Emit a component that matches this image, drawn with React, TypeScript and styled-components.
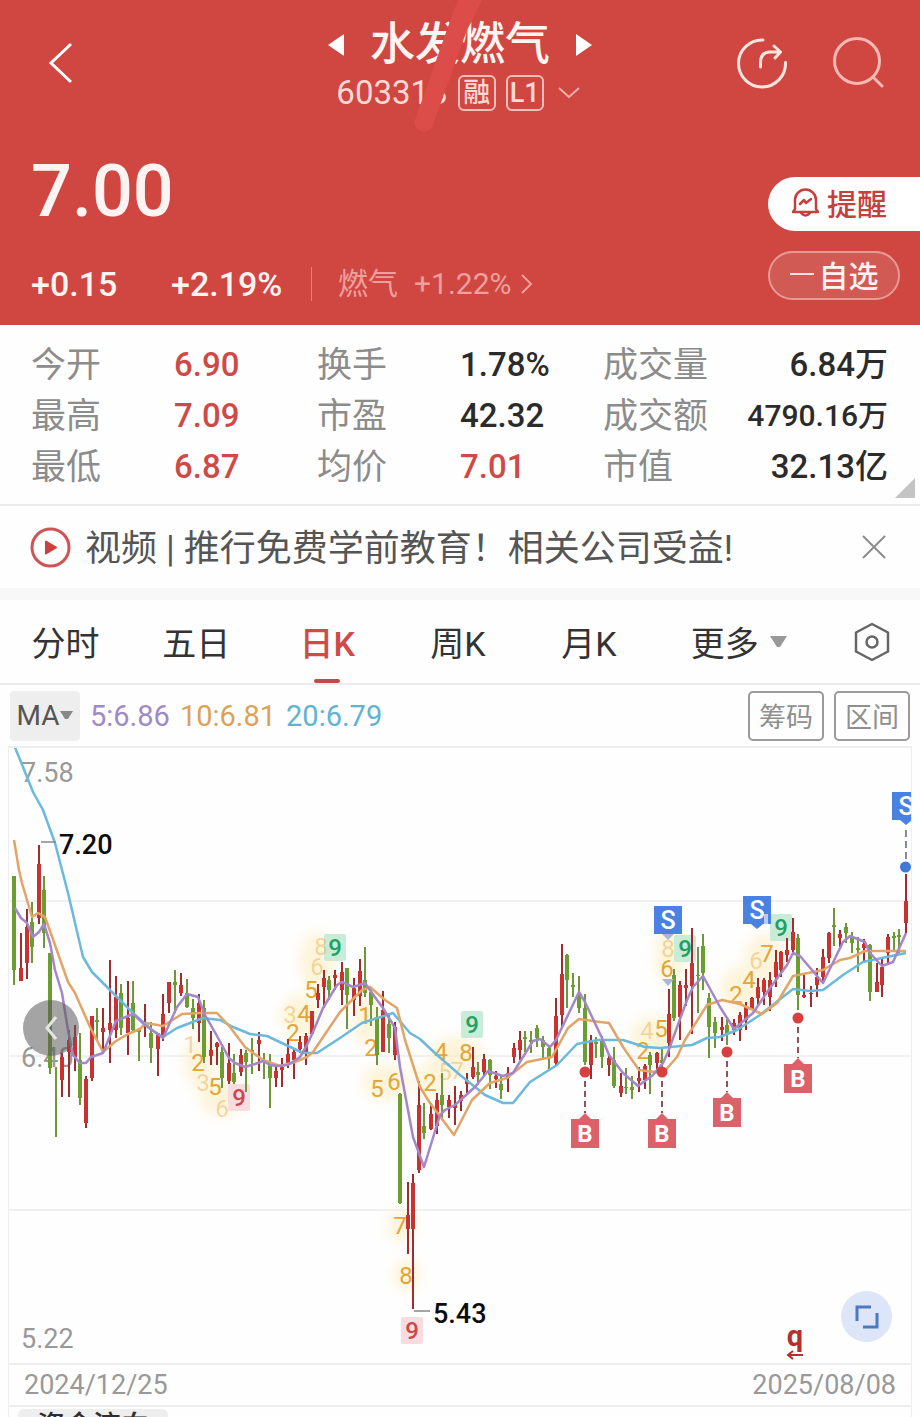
import React from "react";
import styled, { createGlobalStyle } from "styled-components";

const Global = createGlobalStyle`
  *, *::before, *::after { box-sizing: border-box; }
  body {
    margin: 0;
    background: #fefefe;
    font-family: Roboto, "Noto Sans CJK SC", sans-serif;
    color: #2e2e2e;
  }
  button { font: inherit; color: inherit; background: none; border: 0; padding: 0; cursor: pointer; }
  a { color: inherit; text-decoration: none; }
  svg { display: block; }
`;

const Page = styled.main`
  height: 100vh;
  overflow: hidden;
  display: flex;
  flex-direction: column;
  & > * { flex-shrink: 0; }
`;

const Header = styled.header`
  background: #d04641;
  color: #fff4f2;
  height: 325px;
  position: relative;
`;

const TopBar = styled.div`
  display: grid;
  grid-template-columns: 1fr auto 1fr;
  align-items: center;
  height: 126px;
  padding: 0 36px;
`;

const HeaderBack = styled.button`
  justify-self: start;
  padding: 0 10px;
`;

const TitleBlock = styled.div`
  display: flex;
  flex-direction: column;
  align-items: center;
  padding-top: 6px;
`;

const TitleRow = styled.div`
  display: flex;
  align-items: center;
  gap: 26px;
`;

const StockName = styled.h1`
  margin: 0;
  font-size: 45px;
  line-height: 50px;
  font-weight: 500;
`;

const CodeRow = styled.div`
  display: flex;
  align-items: center;
  gap: 10px;
  color: #ffd9d4;
  font-size: 33px;
  line-height: 38px;
  margin-top: 4px;
`;

const Badge = styled.span`
  width: 38px;
  height: 36px;
  border: 2px solid #f5bdb8;
  border-radius: 6px;
  font-size: 27px;
  line-height: 33px;
  font-weight: 500;
  text-align: center;
`;

const Swipe = styled.svg`
  position: absolute;
  top: 0;
  left: calc(50% - 60px);
  width: 90px;
  height: 140px;
  pointer-events: none;
`;

const Actions = styled.div`
  display: flex;
  justify-content: flex-end;
  gap: 44px;
`;

const Quote = styled.div`
  display: flex;
  justify-content: space-between;
`;

const QuoteMain = styled.div`
  padding: 28px 0 0 31px;
`;

const Price = styled.div`
  font-size: 72px;
  line-height: 76px;
  font-weight: 500;
`;

const ChangeRow = styled.div`
  display: flex;
  align-items: center;
  margin-top: 34px;
  height: 40px;
  font-size: 34px;
  font-weight: 500;
`;

const Change = styled.span`
  width: 140px;
`;

const Sector = styled.a`
  display: flex;
  align-items: center;
  gap: 16px;
  padding-left: 26px;
  border-left: 1px solid #dd827c;
  font-size: 30px;
  line-height: 34px;
  font-weight: 400;
  color: #eda19c;
`;

const SectorChange = styled.span`
  display: flex;
  align-items: center;
  gap: 8px;
  font-size: 30px;
`;

const QuoteActions = styled.div`
  display: flex;
  flex-direction: column;
  gap: 20px;
  width: 152px;
  padding-top: 51px;
`;

const RemindButton = styled.button`
  display: flex;
  align-items: center;
  gap: 7px;
  height: 54px;
  padding: 0 0 4px 23px;
  background: #fff;
  color: #c4403c;
  border-radius: 27px 0 0 27px;
  font-size: 30px;
  font-weight: 500;
`;

const WatchButton = styled.button`
  display: flex;
  align-items: center;
  justify-content: center;
  gap: 5px;
  width: 132px;
  height: 49px;
  padding-bottom: 3px;
  border: 2px solid #e79a95;
  border-radius: 25px;
  background: #d15a55;
  font-size: 30px;
  font-weight: 500;
  &::before { content: ""; width: 24px; height: 2px; background: #ffe3e0; }
`;

const Stats = styled.dl`
  position: relative;
  display: grid;
  grid-template-columns: 143fr 143fr 143fr 143fr 110fr 175fr;
  grid-auto-rows: 51px;
  margin: 0;
  padding: 14px 32px 12px 31px;
  height: 179px;
`;

const StatLabel = styled.dt`
  font-size: 35px;
  line-height: 54px;
  color: #8c8c8c;
`;

const StatValue = styled.dd<{ $up?: boolean; $end?: boolean; $small?: boolean }>`
  margin: 0;
  font-size: ${(p) => (p.$small ? 30 : 33)}px;
  line-height: 52px;
  font-weight: 500;
  white-space: nowrap;
  text-align: ${(p) => (p.$end ? "right" : "left")};
  color: ${(p) => (p.$up ? "#cf4a47" : "#2b2b2b")};
`;

const Corner = styled.span`
  position: absolute;
  right: 5px;
  bottom: 6px;
  border-left: 20px solid transparent;
  border-bottom: 20px solid #c4c4c4;
`;

const News = styled.section`
  display: flex;
  align-items: center;
  gap: 14px;
  height: 84px;
  padding: 0 34px 0 30px;
  border-top: 2px solid #ebebeb;
`;

const NewsLink = styled.a`
  flex: 1;
  padding-top: 4px;
  font-size: 36px;
  line-height: 48px;
  color: #555;
  white-space: nowrap;
`;

const Tabs = styled.nav`
  display: grid;
  grid-template-columns: repeat(5, 131fr) 170fr 96fr;
  height: 97px;
  border-top: 12px solid #f8f8f8;
  border-bottom: 2px solid #ebebeb;
`;

const Tab = styled.button<{ $active?: boolean }>`
  position: relative;
  display: flex;
  align-items: center;
  justify-content: center;
  gap: 10px;
  font-size: 34px;
  font-weight: ${(p) => (p.$active ? 500 : 400)};
  color: ${(p) => (p.$active ? "#d04a48" : "#333")};
  &::after {
    content: "";
    display: ${(p) => (p.$active ? "block" : "none")};
    position: absolute;
    bottom: 0;
    width: 26px;
    height: 4px;
    border-radius: 2px;
    background: #c4484a;
  }
`;

const MaBar = styled.div`
  display: flex;
  align-items: center;
  gap: 10px;
  height: 61px;
  padding: 0 10px;
`;

const MaSelect = styled.button`
  display: flex;
  align-items: center;
  justify-content: center;
  gap: 1px;
  width: 70px;
  height: 50px;
  background: #eeeeee;
  border-radius: 4px;
  font-size: 28px;
  color: #555;
`;

const MaValue = styled.span<{ $color: string }>`
  font-size: 29px;
  line-height: 34px;
  color: ${(p) => p.$color};
`;

const Spacer = styled.span`
  flex: 1;
`;

const OutlineButton = styled.button`
  width: 76px;
  height: 50px;
  border: 2px solid #9a9a9a;
  border-radius: 5px;
  font-size: 27px;
  color: #8f8f8f;
`;

const ChartFrame = styled.section`
  position: relative;
  margin: 0 8px;
  border: solid #eeeeee;
  border-width: 2px 1px;
`;

const ChartSvg = styled.svg`
  width: 100%;
  height: auto;
  font-family: Roboto, sans-serif;
`;

const BackButton = styled.button`
  position: absolute;
  left: 14px;
  top: 41%;
  width: 56px;
  height: 56px;
  border-radius: 50%;
  background: rgba(90, 90, 90, 0.55);
  display: grid;
  place-items: center;
`;

const ExpandButton = styled.button`
  position: absolute;
  right: 19px;
  bottom: 21px;
  width: 51px;
  height: 51px;
  border-radius: 50%;
  background: #dde6f8;
  display: grid;
  place-items: center;
`;

const Dates = styled.div`
  display: flex;
  justify-content: space-between;
  margin: 0 8px;
  padding: 0 15px;
  border: solid #eeeeee;
  border-width: 0 1px 2px;
  font-size: 27px;
  line-height: 40px;
  color: #999;
`;

const Indicator = styled.div`
  margin: 0 8px;
  padding: 2px 9px 0;
  border: solid #eeeeee;
  border-width: 0 1px;
`;

const IndicatorButton = styled.button`
  width: 150px;
  height: 36px;
  background: #eeeeee;
  border-radius: 6px;
  font-size: 28px;
  line-height: 36px;
  font-weight: 500;
`;

// x, wick top, wick bottom, body top, body bottom, direction (1 = up)
type Candle = [number, number, number, number, number, 0 | 1];
const candles: Candle[] = [
  [14, 876, 985, 876, 970, 0], [21, 933, 981, 968, 981, 1], [27, 909, 979, 927, 963, 1],
  [32, 902, 963, 922, 947, 0], [39, 845, 924, 864, 918, 1], [44, 876, 948, 890, 933, 0],
  [50, 953, 1074, 953, 1068, 0], [56, 1067, 1137, 1067, 1067, 0], [62, 1053, 1097, 1057, 1080, 1],
  [69, 1030, 1097, 1040, 1052, 1], [75, 1025, 1071, 1037, 1057, 1], [80, 1033, 1105, 1060, 1098, 0],
  [86, 1076, 1128, 1079, 1123, 1], [92, 1016, 1081, 1016, 1078, 1], [97, 1008, 1039, 1020, 1022, 0],
  [103, 1008, 1052, 1028, 1032, 1], [110, 960, 1063, 1023, 1030, 1], [116, 976, 1038, 997, 1030, 1],
  [121, 984, 1035, 993, 1028, 0], [128, 981, 1055, 1018, 1033, 1], [133, 981, 1033, 1003, 1030, 0],
  [139, 1028, 1061, 1030, 1032, 0], [145, 1004, 1037, 1022, 1027, 1], [151, 1022, 1063, 1033, 1048, 0],
  [158, 1033, 1076, 1033, 1049, 1], [163, 994, 1041, 1014, 1035, 1], [169, 982, 1013, 982, 1003, 1],
  [175, 970, 1013, 982, 985, 0], [181, 973, 996, 985, 993, 1], [187, 979, 1008, 993, 1007, 0],
  [193, 999, 1029, 1008, 1018, 0], [199, 994, 1042, 1003, 1023, 1], [204, 1000, 1063, 1008, 1057, 0],
  [211, 1031, 1065, 1050, 1056, 1], [217, 1042, 1065, 1043, 1047, 1], [222, 1047, 1088, 1052, 1078, 0],
  [229, 1043, 1084, 1063, 1081, 1], [234, 1054, 1084, 1073, 1082, 0], [241, 1049, 1076, 1055, 1072, 1],
  [246, 1050, 1092, 1053, 1062, 0], [252, 1038, 1074, 1050, 1052, 0], [259, 1032, 1071, 1040, 1044, 1],
  [264, 1053, 1079, 1060, 1062, 0], [270, 1054, 1108, 1063, 1078, 0], [276, 1067, 1087, 1071, 1078, 1],
  [282, 1058, 1087, 1067, 1070, 1], [288, 1039, 1068, 1054, 1064, 1], [294, 1049, 1079, 1052, 1060, 1],
  [300, 1036, 1053, 1042, 1049, 1], [306, 1033, 1065, 1036, 1052, 1], [312, 1011, 1034, 1011, 1034, 1],
  [318, 984, 1008, 993, 1000, 1], [324, 970, 1008, 978, 987, 1], [329, 976, 1000, 980, 990, 0],
  [335, 970, 990, 975, 978, 1], [342, 962, 1005, 972, 990, 1], [347, 968, 1029, 968, 995, 0],
  [354, 978, 1016, 988, 1000, 1], [360, 959, 1006, 971, 996, 1], [365, 947, 997, 980, 993, 0],
  [371, 990, 1026, 992, 1005, 0], [377, 1007, 1065, 1017, 1055, 0], [383, 991, 1052, 1010, 1052, 1],
  [389, 1015, 1053, 1024, 1038, 0], [395, 1022, 1060, 1027, 1055, 1], [400, 1093, 1204, 1094, 1203, 0],
  [408, 1182, 1254, 1215, 1229, 1], [413, 1174, 1309, 1183, 1229, 1], [419, 1081, 1173, 1105, 1170, 1],
  [424, 1103, 1139, 1126, 1133, 0], [431, 1103, 1130, 1114, 1129, 1], [437, 1093, 1134, 1100, 1126, 1],
  [442, 1073, 1120, 1095, 1105, 0], [449, 1095, 1118, 1100, 1107, 1], [455, 1086, 1125, 1105, 1108, 1],
  [461, 1091, 1111, 1095, 1101, 1], [467, 1073, 1093, 1080, 1084, 1], [473, 1047, 1079, 1067, 1077, 1],
  [478, 1062, 1085, 1072, 1075, 0], [484, 1054, 1075, 1059, 1072, 1], [490, 1059, 1089, 1060, 1075, 0],
  [496, 1071, 1088, 1076, 1079, 1], [501, 1075, 1099, 1084, 1090, 0], [508, 1067, 1092, 1073, 1078, 1],
  [514, 1043, 1063, 1048, 1057, 1], [520, 1031, 1060, 1040, 1050, 1], [525, 1031, 1052, 1037, 1039, 0],
  [531, 1031, 1053, 1040, 1042, 0], [537, 1025, 1047, 1028, 1038, 0], [543, 1036, 1059, 1040, 1047, 0],
  [549, 1046, 1070, 1048, 1057, 0], [556, 998, 1065, 1016, 1063, 1], [562, 944, 1027, 974, 1015, 1],
  [567, 954, 1008, 955, 980, 0], [573, 973, 997, 985, 987, 0], [579, 976, 1013, 997, 1008, 0],
  [585, 994, 1065, 1008, 1062, 0], [591, 1035, 1079, 1040, 1065, 1], [596, 1037, 1058, 1042, 1044, 0],
  [602, 1036, 1068, 1040, 1057, 0], [609, 1055, 1076, 1058, 1065, 1], [614, 1047, 1088, 1060, 1086, 0],
  [621, 1073, 1097, 1086, 1093, 1], [626, 1068, 1094, 1087, 1088, 0], [632, 1076, 1099, 1087, 1090, 0],
  [639, 1067, 1092, 1078, 1081, 1], [645, 1064, 1089, 1066, 1080, 1], [650, 1052, 1094, 1055, 1065, 0],
  [657, 1052, 1072, 1053, 1063, 1], [662, 1048, 1073, 1060, 1063, 0], [669, 989, 1057, 1014, 1043, 1],
  [674, 969, 1021, 975, 1018, 0], [680, 981, 1040, 985, 1017, 1], [686, 969, 1006, 985, 988, 1],
  [692, 928, 1034, 963, 986, 1], [698, 947, 1013, 975, 976, 0], [703, 934, 990, 946, 973, 0],
  [709, 993, 1058, 998, 1027, 0], [715, 1017, 1048, 1022, 1033, 0], [722, 1017, 1041, 1027, 1030, 1],
  [727, 1017, 1045, 1025, 1035, 0], [734, 1019, 1035, 1023, 1030, 1], [740, 1012, 1041, 1015, 1030, 1],
  [746, 1002, 1030, 1007, 1020, 1], [752, 997, 1010, 998, 1010, 1], [758, 978, 1005, 987, 998, 1],
  [764, 978, 1005, 980, 992, 1], [770, 972, 1011, 980, 997, 1], [776, 950, 987, 962, 977, 1],
  [781, 951, 977, 952, 970, 1], [787, 938, 962, 950, 955, 1], [793, 918, 955, 932, 950, 1],
  [798, 934, 1010, 938, 995, 0], [804, 973, 998, 995, 997, 1], [811, 986, 1007, 993, 994, 1],
  [817, 968, 997, 977, 985, 1], [823, 949, 983, 957, 977, 1], [829, 932, 963, 933, 958, 1],
  [834, 908, 946, 925, 927, 0], [840, 930, 947, 934, 938, 1], [846, 923, 943, 927, 933, 0],
  [852, 932, 953, 937, 943, 0], [858, 937, 972, 948, 950, 0], [864, 939, 962, 944, 948, 1],
  [870, 944, 1001, 945, 992, 0], [877, 963, 992, 982, 992, 1], [882, 958, 997, 967, 985, 1],
  [888, 934, 963, 937, 953, 1], [894, 932, 950, 936, 938, 0], [899, 929, 953, 935, 937, 0],
  [906, 874, 933, 901, 923, 1],
];

const ma5 =
  "15,908 21,918 27,923 33,937 39,932 44,924 50,943 55,970 62,993 68,1030 73,1055 80,1063 86,1063 91,1057 103,1053 116,1021 128,1016 133,1014 145,1025 163,1038 177,1007 187,994 198,997 205,1015 217,1036 229,1058 235,1063 245,1067 255,1064 263,1061 270,1065 277,1066 288,1065 300,1057 307,1045 313,1032 323,1008 337,985 342,982 353,987 365,983 377,1000 383,1008 395,1028 400,1067 413,1137 424,1167 440,1115 445,1110 455,1105 475,1087 488,1071 503,1076 513,1073 533,1041 540,1039 550,1047 556,1040 579,992 585,1002 602,1038 609,1055 623,1073 638,1086 653,1075 663,1063 668,1052 687,1000 693,987 703,976 720,1007 734,1029 753,1013 770,988 787,965 793,953 800,956 823,983 843,942 850,936 865,942 870,953 882,966 893,962 906,933";
const ma10 =
  "14,840 19,870 22,883 32,917 38,913 45,917 55,945 68,982 75,993 90,1027 103,1052 116,1041 128,1034 140,1029 146,1023 163,1026 182,1014 200,1013 217,1013 230,1027 245,1047 263,1060 280,1066 295,1062 307,1057 313,1052 340,1012 362,990 370,987 385,1000 397,1008 405,1040 420,1087 430,1103 454,1135 472,1100 490,1083 507,1078 527,1062 552,1057 568,1028 579,1019 600,1022 609,1023 623,1047 639,1070 663,1073 677,1057 685,1040 707,1005 722,1000 740,1004 762,1014 777,1003 793,976 823,970 840,960 850,958 865,951 887,951 906,951";
const ma20 =
  "14,745 23,767 33,792 43,810 55,843 68,893 83,957 92,972 108,988 133,1013 152,1030 163,1037 177,1028 203,1018 220,1020 233,1027 250,1034 267,1036 303,1053 317,1053 340,1038 362,1023 393,1013 410,1033 420,1039 437,1055 460,1075 485,1095 503,1103 513,1103 530,1082 557,1065 577,1044 598,1040 623,1040 645,1047 660,1048 692,1045 707,1038 720,1037 737,1030 760,1015 793,989 810,991 823,990 843,975 863,962 906,953";

// x, centre y, digit, faded
const counts: [number, number, string, boolean?][] = [
  [190, 1044, "1", true], [198, 1062, "2"], [203, 1082, "3", true], [215, 1086, "5"], [222, 1108, "6", true],
  [290, 1014, "3", true], [293, 1032, "2"], [304, 1013, "4"], [311, 989, "5"], [317, 966, "6", true],
  [321, 946, "8", true], [365, 1015, "1"], [371, 1047, "2"], [377, 1088, "5"],
  [394, 1081, "6"], [400, 1225, "7"], [406, 1275, "8"], [430, 1082, "2"], [441, 1051, "4"],
  [445, 1071, "5", true], [457, 1070, "7", true], [466, 1052, "8"], [643, 1050, "2"], [647, 1030, "4", true],
  [661, 1028, "5"], [667, 968, "6"], [668, 948, "8", true], [736, 994, "2"],
  [749, 979, "4"], [756, 960, "6", true], [767, 953, "7"],
];

const glows: [number, number, number, number][] = [
  [200, 1062, 16, 26], [222, 1098, 24, 18], [300, 1016, 20, 22], [317, 962, 18, 30], [366, 1020, 14, 26],
  [386, 1082, 24, 18], [401, 1226, 14, 16], [407, 1275, 14, 16], [432, 1080, 16, 18], [456, 1056, 26, 20],
  [654, 1036, 24, 20], [670, 956, 16, 28], [740, 988, 20, 22], [764, 958, 20, 24],
];

const nines: [number, number, boolean][] = [
  [335, 948, false], [472, 1025, false], [685, 949, false], [781, 928, false],
  [239, 1098, true], [412, 1331, true],
];

const buys: [number, number, number][] = [
  [585, 1072, 1133], [662, 1072, 1133], [727, 1052, 1112], [798, 1018, 1078],
];

function BuyMark({ x, dot, y }: { x: number; dot: number; y: number }) {
  return (
    <g>
      <path d={`M${x} ${dot + 9}V${y - 20}`} stroke="#96505a" strokeWidth="2" strokeDasharray="6 4" />
      <circle cx={x} cy={dot} r="5.5" fill="#d8403f" />
      <path d={`M${x - 14} ${y - 14}h8l6 -6 6 6h8v29h-28z`} fill="#da6268" />
      <text x={x} y={y + 9} fontSize="24" fontWeight="700" fill="#fff" textAnchor="middle">B</text>
    </g>
  );
}

function SellMark({ x, y, tip }: { x: number; y: number; tip?: boolean }) {
  return (
    <g>
      <path d={`M${x - 14} ${y - 14}h28v28h${tip ? "-8l-6 5 -6 -5h-8" : "-28"}z`} fill="#4a82e4" />
      <text x={x} y={y + 9} fontSize="25" fontWeight="500" fill="#fff" textAnchor="middle">S</text>
    </g>
  );
}

function KLineChart() {
  return (
    <ChartSvg viewBox="9 748 902 615" role="img" aria-label="日K线图">
      <defs>
        <filter id="soft" x="-50%" y="-50%" width="200%" height="200%">
          <feGaussianBlur stdDeviation="6" />
        </filter>
      </defs>
      <path d="M8 901H912M8 1056H912M8 1210H912" stroke="#f0f0f0" strokeWidth="2" />
      <g fill="#fcefc8" opacity="0.65" filter="url(#soft)">
        {glows.map(([x, y, rx, ry], i) => <ellipse key={i} cx={x} cy={y} rx={rx} ry={ry} />)}
      </g>
      <g fontSize="27" fill="#999">
        <text x="21" y="782">7.58</text>
        <text x="21" y="1067">6.40</text>
        <text x="21" y="1348">5.22</text>
      </g>
      {nines.map(([x, y, low]) => (
        <rect key={x} x={x - 11} y={y - 14} width="22" height="27" rx="2" fill={low ? "#f9dcdf" : "#c9ecd9"} />
      ))}
      <g fontSize="24" fill="#e3a536" textAnchor="middle">
        {counts.map(([x, y, n, faded], i) => (
          <text key={i} x={x} y={y + 9} opacity={faded ? 0.4 : 1}>{n}</text>
        ))}
      </g>
      {candles.map(([x, high, low, top, bottom, up]) => (
        <g key={x}>
          <path d={`M${x} ${high}V${low}`} stroke={up ? "#a12c30" : "#6f9638"} strokeWidth="2" />
          <path d={`M${x} ${top}V${bottom}`} stroke={up ? "#c93230" : "#6a9e30"} strokeWidth="4" />
        </g>
      ))}
      <g fill="none" strokeWidth="2.5" strokeLinejoin="round">
        <polyline points={ma20} stroke="#6bb9dc" />
        <polyline points={ma10} stroke="#e2a467" />
        <polyline points={ma5} stroke="#a387c8" />
      </g>
      <g fontSize="24" fontWeight="500" textAnchor="middle">
        {nines.map(([x, y, low]) => (
          <text key={x} x={x} y={y + 8} fill={low ? "#c8484f" : "#23a062"}>9</text>
        ))}
      </g>
      <path d="M41 842H56M414 1311H430" stroke="#888" strokeWidth="1.5" />
      <g fontSize="27" fontWeight="500" fill="#0c0c0c">
        <text x="59" y="854">7.20</text>
        <text x="433" y="1323">5.43</text>
      </g>
      {buys.map(([x, dot, y]) => <BuyMark key={x} x={x} dot={dot} y={y} />)}
      <path d="M662 934h12l-6 6zM662 979h12l-6 7z" fill="#a9b8d6" />
      <SellMark x={668} y={920} />
      <SellMark x={757} y={910} tip />
      <rect x="764" y="914" width="4" height="10" fill="#bccbe8" />
      <SellMark x={906} y={806} tip />
      <path d="M906 830V862" stroke="#5c6478" strokeWidth="1.5" strokeDasharray="7 4" />
      <circle cx="905.5" cy="867" r="5.5" fill="#3f78d8" />
      <text x="795" y="1346" fontSize="29" fontWeight="700" fill="#b3302c" textAnchor="middle">q</text>
      <path d="M803 1355H789M793 1351l-5 4 5 4" fill="none" stroke="#b3302c" strokeWidth="2" />
    </ChartSvg>
  );
}

const stats: { label: string; value: string; up?: boolean; end?: boolean; small?: boolean }[] = [
  { label: "今开", value: "6.90", up: true }, { label: "换手", value: "1.78%" }, { label: "成交量", value: "6.84万", end: true },
  { label: "最高", value: "7.09", up: true }, { label: "市盈", value: "42.32" }, { label: "成交额", value: "4790.16万", end: true, small: true },
  { label: "最低", value: "6.87", up: true }, { label: "均价", value: "7.01", up: true }, { label: "市值", value: "32.13亿", end: true },
];

export default function App() {
  return (
    <>
      <Global />
      <Page>
        <Header>
          <TopBar>
            <HeaderBack aria-label="返回">
              <svg width="30" height="44" viewBox="0 0 30 44" fill="none" stroke="#fff" strokeWidth="3"><path d="M25 3L5 22L25 41" /></svg>
            </HeaderBack>
            <TitleBlock>
              <TitleRow>
                <button aria-label="上一只">
                  <svg width="16" height="24" viewBox="0 0 16 24"><path d="M16 1V23L0 12Z" fill="#fff" /></svg>
                </button>
                <StockName>水发燃气</StockName>
                <button aria-label="下一只">
                  <svg width="16" height="24" viewBox="0 0 16 24"><path d="M0 1V23L16 12Z" fill="#fff" /></svg>
                </button>
              </TitleRow>
              <CodeRow>
                <span>603318</span>
                <Badge>融</Badge>
                <Badge>L1</Badge>
                <svg width="30" height="16" viewBox="0 0 30 16" fill="none" stroke="#eeb0ab" strokeWidth="2"><path d="M5 3L15 12L25 3" /></svg>
              </CodeRow>
            </TitleBlock>
            <Actions>
              <button aria-label="分享">
                <svg width="52" height="52" viewBox="0 0 52 52" fill="none" stroke="#ffe4df" strokeWidth="3" strokeLinecap="round" strokeLinejoin="round">
                  <path d="M27 3A23.500 23.500 0 1 0 49.500 25.500" />
                  <path d="M24.500 30V25Q25 15 34 15H44M38 9L44.500 15L39 21" />
                </svg>
              </button>
              <button aria-label="搜索">
                <svg width="52" height="52" viewBox="0 0 52 52" fill="none" stroke="#f8b9b3" strokeWidth="3" strokeLinecap="round">
                  <circle cx="25" cy="24" r="22.500" /><path d="M42 41L50 49" />
                </svg>
              </button>
            </Actions>
          </TopBar>
          <Swipe viewBox="0 0 90 140" aria-hidden="true">
            <path d="M58 0H82L73 19L67 30L34 122Q32 131 24 132Q13 129 15 120L49 24Z" fill="#dc4d49" />
          </Swipe>
          <Quote>
            <QuoteMain>
              <Price>7.00</Price>
              <ChangeRow>
                <Change>+0.15</Change>
                <Change>+2.19%</Change>
                <Sector href="#sector">
                  燃气
                  <SectorChange>
                    +1.22%
                    <svg width="14" height="22" viewBox="0 0 14 22" fill="none" stroke="#eda19c" strokeWidth="2"><path d="M2 2L11 11L2 20" /></svg>
                  </SectorChange>
                </Sector>
              </ChangeRow>
            </QuoteMain>
            <QuoteActions>
              <RemindButton>
                <svg width="29" height="30" viewBox="0 0 29 30" fill="none" stroke="#c4403c" strokeWidth="2.500" strokeLinejoin="round" strokeLinecap="round">
                  <path d="M4 22V13A10.500 10.500 0 0 1 25 13V22L27 25H2ZM10 26Q14.500 31 19 26M9 17L13 13L15 16L20 12" />
                </svg>
                提醒
              </RemindButton>
              <WatchButton>自选</WatchButton>
            </QuoteActions>
          </Quote>
        </Header>

        <Stats>
          {stats.map((s) => (
            <React.Fragment key={s.label}>
              <StatLabel>{s.label}</StatLabel>
              <StatValue $up={s.up} $end={s.end} $small={s.small}>{s.value}</StatValue>
            </React.Fragment>
          ))}
          <Corner />
        </Stats>

        <News>
          <svg width="41" height="41" viewBox="0 0 41 41">
            <circle cx="20.500" cy="20.500" r="18.500" fill="none" stroke="#cf5355" strokeWidth="3" />
            <path d="M16 14.500L26 20.500L16 26.500Z" fill="#cf3f40" stroke="#cf3f40" strokeWidth="2" strokeLinejoin="round" />
          </svg>
          <NewsLink href="#news">视频 | 推行免费学前教育！相关公司受益!</NewsLink>
          <button aria-label="关闭">
            <svg width="24" height="24" viewBox="0 0 24 24" stroke="#8c8c8c" strokeWidth="2"><path d="M1 1L23 23M23 1L1 23" /></svg>
          </button>
        </News>

        <Tabs>
          <Tab>分时</Tab>
          <Tab>五日</Tab>
          <Tab $active>日K</Tab>
          <Tab>周K</Tab>
          <Tab>月K</Tab>
          <Tab>
            更多
            <svg width="19" height="13" viewBox="0 0 19 13"><path d="M1 1H18L11 12H8Z" fill="#999" /></svg>
          </Tab>
          <Tab aria-label="设置">
            <svg width="38" height="40" viewBox="0 0 38 40" fill="none" stroke="#666" strokeWidth="2.500" strokeLinejoin="round">
              <path d="M19 2L35 10.500V29.500L19 38L3 29.500V10.500Z" /><circle cx="19" cy="20" r="5.500" />
            </svg>
          </Tab>
        </Tabs>

        <MaBar>
          <MaSelect>
            MA
            <svg width="13" height="9" viewBox="0 0 13 9"><path d="M0 0H13L8 8H5Z" fill="#888" /></svg>
          </MaSelect>
          <MaValue $color="#9f8ac6">5:6.86</MaValue>
          <MaValue $color="#dba258">10:6.81</MaValue>
          <MaValue $color="#62b2d3">20:6.79</MaValue>
          <Spacer />
          <OutlineButton>筹码</OutlineButton>
          <OutlineButton>区间</OutlineButton>
        </MaBar>

        <ChartFrame>
          <KLineChart />
          <BackButton aria-label="向前">
            <svg width="14" height="24" viewBox="0 0 14 24" fill="none" stroke="#e4e4e4" strokeWidth="3"><path d="M12 1L3 12L12 23" /></svg>
          </BackButton>
          <ExpandButton aria-label="全屏">
            <svg width="24" height="24" viewBox="0 0 24 24" fill="none" stroke="#4b7ac2" strokeWidth="3"><path d="M2 16V2H16M22 8V22H8" /></svg>
          </ExpandButton>
        </ChartFrame>
        <Dates>
          <time>2024/12/25</time>
          <time>2025/08/08</time>
        </Dates>
        <Indicator>
          <IndicatorButton>资金流向</IndicatorButton>
        </Indicator>
      </Page>
    </>
  );
}
